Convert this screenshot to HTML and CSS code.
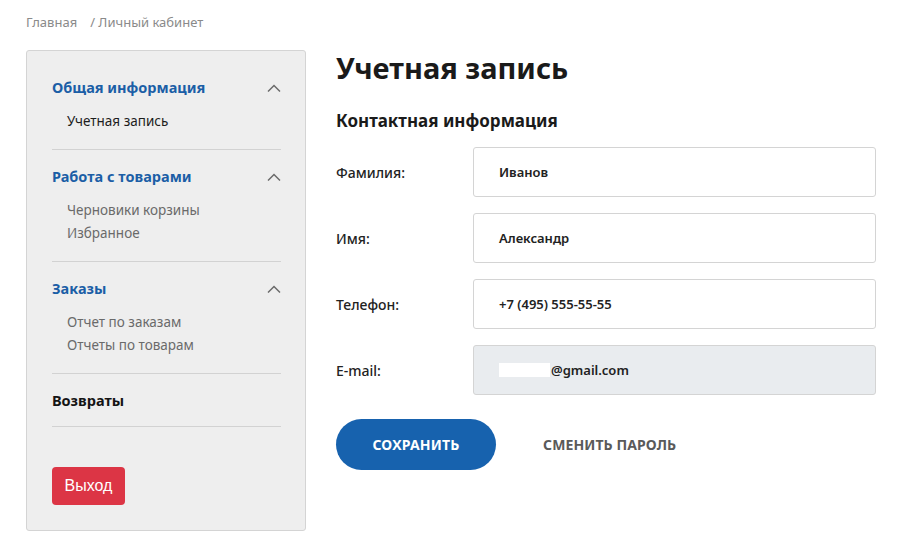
FILE: index.html
```html
<!DOCTYPE html>
<html lang="ru">
<head>
<meta charset="utf-8">
<title>Учетная запись</title>
<link rel="stylesheet" href="styles.css">
</head>
<body>
<div class="page">
  <nav class="crumbs"><span>Главная</span><span class="sep">/ Личный кабинет</span></nav>
  <div class="layout">
    <aside class="sidebar">
      <div class="section">
        <div class="sec-head"><span class="sec-title">Общая информация</span><svg class="chev" viewBox="0 0 14 8" width="14" height="8"><path d="M1 7.5 L7 1.5 L13 7.5" fill="none" stroke="#6b6b6b" stroke-width="1.5"/></svg></div>
        <ul class="subs"><li class="active">Учетная запись</li></ul>
      </div>
      <div class="section">
        <div class="sec-head"><span class="sec-title">Работа с товарами</span><svg class="chev" viewBox="0 0 14 8" width="14" height="8"><path d="M1 7.5 L7 1.5 L13 7.5" fill="none" stroke="#6b6b6b" stroke-width="1.5"/></svg></div>
        <ul class="subs"><li>Черновики корзины</li><li>Избранное</li></ul>
      </div>
      <div class="section">
        <div class="sec-head"><span class="sec-title">Заказы</span><svg class="chev" viewBox="0 0 14 8" width="14" height="8"><path d="M1 7.5 L7 1.5 L13 7.5" fill="none" stroke="#6b6b6b" stroke-width="1.5"/></svg></div>
        <ul class="subs"><li>Отчет по заказам</li><li>Отчеты по товарам</li></ul>
      </div>
      <div class="section last">
        <div class="sec-head"><span class="sec-title dark">Возвраты</span></div>
      </div>
      <button class="logout">Выход</button>
    </aside>
    <main class="main">
      <h1>Учетная запись</h1>
      <h2>Контактная информация</h2>
      <div class="form">
        <label>Фамилия:</label><div class="field">Иванов</div>
        <label>Имя:</label><div class="field">Александр</div>
        <label>Телефон:</label><div class="field">+7 (495) 555-55-55</div>
        <label>E-mail:</label><div class="field disabled"><span class="mask"></span>@gmail.com</div>
      </div>
      <div class="actions">
        <button class="save">СОХРАНИТЬ</button>
        <button class="change">СМЕНИТЬ ПАРОЛЬ</button>
      </div>
    </main>
  </div>
</div>
</body>
</html>
```
FILE: styles.css
```css
* { box-sizing: border-box; }
body {
  margin: 0;
  background: #fff;
  font-family: "Noto Sans", "Open Sans", sans-serif;
  color: #1d1d1d;
}
.page { padding: 13px 0 0 26px; }
.crumbs {
  font-size: 13px;
  line-height: 18px;
  color: #8a8a8a;
  display: flex;
  gap: 13px;
}
.layout {
  display: flex;
  gap: 30px;
  margin-top: 19px;
  align-items: flex-start;
}
.sidebar {
  width: 280px;
  height: 481px;
  background: #eeeeee;
  border: 1px solid #d4d4d4;
  border-radius: 3px;
  padding: 10px 24px 0 25px;
}
.section {
  padding: 15px 0 16px;
  border-bottom: 1px solid #d2d2d2;
}
.section.last { padding-bottom: 15px; }
.sec-head {
  display: flex;
  align-items: center;
  justify-content: space-between;
  height: 22px;
}
.sec-title {
  font-size: 14.5px;
  font-weight: 700;
  color: #1b5ea6;
}
.sec-title.dark { color: #141414; }
.chev { margin-right: 0; margin-top: 2px; }
.subs {
  list-style: none;
  margin: 12px 0 0;
  padding: 0 0 0 15px;
}
.subs li {
  font-size: 13.5px;
  line-height: 23px;
  color: #6a6a6a;
}
.subs li.active { color: #1d1d1d; }
.logout {
  margin-top: 40px;
  width: 73px;
  height: 38px;
  border: none;
  border-radius: 4px;
  background: #dc3545;
  color: #fff;
  font-family: "Liberation Sans", Arial, sans-serif;
  font-size: 16px;
  padding: 0;
}
.main { width: 540px; }
h1 {
  margin: 0;
  font-size: 29px;
  line-height: 36px;
  font-weight: 700;
  color: #1a1a1a;
}
h2 {
  margin: 24px 0 0;
  font-size: 17px;
  line-height: 22px;
  font-weight: 700;
  color: #1a1a1a;
}
.form {
  margin-top: 15px;
  display: grid;
  grid-template-columns: 137px 403px;
  row-gap: 16px;
  align-items: center;
}
.form label {
  font-size: 14px;
  font-weight: 500;
  color: #222;
}
.field {
  height: 50px;
  border: 1px solid #d4d4d4;
  border-radius: 3px;
  background: #fff;
  padding: 0 0 0 25px;
  display: flex;
  align-items: center;
  font-size: 13px;
  font-weight: 600;
  color: #222;
}
.field.disabled { background: #e9ecef; }
.mask {
  display: inline-block;
  width: 51px;
  height: 14px;
  background: #fff;
  margin-right: 1px;
}
.actions {
  margin-top: 24px;
  display: flex;
  align-items: center;
  gap: 47px;
}
.save {
  width: 160px;
  height: 51px;
  border: none;
  border-radius: 26px;
  background: #1762ae;
  color: #fff;
  font-family: inherit;
  font-size: 14px;
  font-weight: 700;
  letter-spacing: 0.2px;
}
.change {
  border: none;
  background: none;
  padding: 0;
  font-family: inherit;
  font-size: 14px;
  font-weight: 700;
  color: #5a5a5a;
  letter-spacing: 0.1px;
}
```
